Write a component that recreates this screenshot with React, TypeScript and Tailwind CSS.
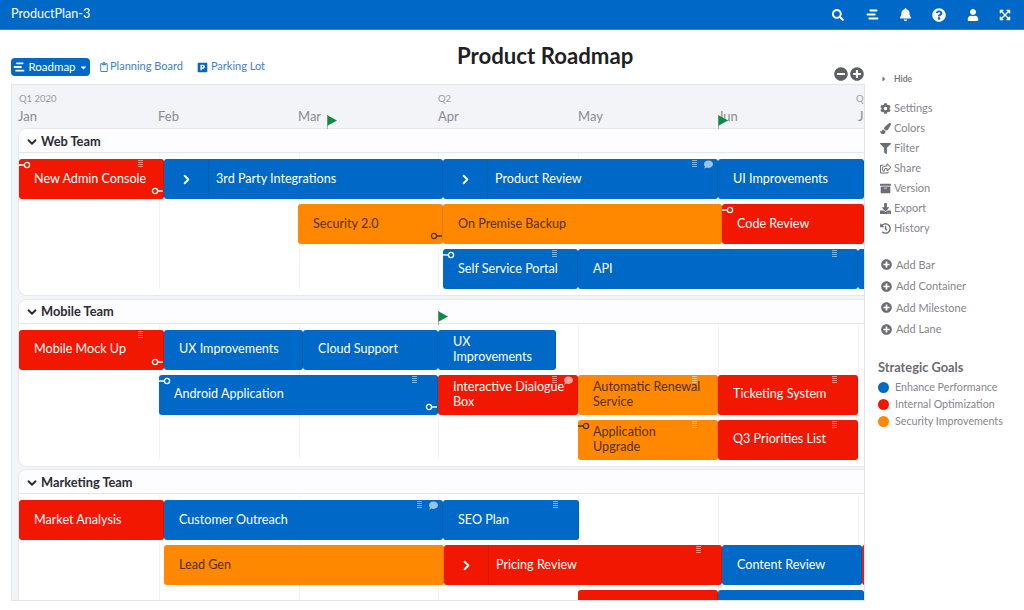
import type { FC } from 'react';
import { ChevronDown, ChevronRight } from 'lucide-react';
import {
  FaArchive,
  FaBell,
  FaCaretDown,
  FaCaretRight,
  FaCog,
  FaComment,
  FaDownload,
  FaExpandArrowsAlt,
  FaFilter,
  FaHistory,
  FaMinusCircle,
  FaPaintBrush,
  FaParking,
  FaPlusCircle,
  FaQuestionCircle,
  FaRegClipboard,
  FaRegShareSquare,
  FaSearch,
  FaUser,
} from 'react-icons/fa';

type Tone = 'blue' | 'red' | 'orange';

interface BarData {
  label?: string;
  tone: Tone;
  size: string;
  chevron?: boolean;
  start?: boolean;
  end?: boolean;
  grip?: boolean;
  comment?: boolean;
}

interface LaneData {
  name: string;
  rows: BarData[][];
}

const toneClass: Record<Tone, string> = {
  blue: 'bg-[#0069c8] text-white',
  red: 'bg-[#f21700] text-white',
  orange: 'bg-[#ff8800] text-[#4f3000]',
};

const lanes: LaneData[] = [
  {
    name: 'Web Team',
    rows: [
      [
        { label: 'New Admin Console', tone: 'red', size: 'w-[145px]', start: true, end: true, grip: true },
        { label: '3rd Party Integrations', tone: 'blue', size: 'w-[279px]', chevron: true },
        { label: 'Product Review', tone: 'blue', size: 'w-[275px]', chevron: true, grip: true, comment: true },
        { label: 'UI Improvements', tone: 'blue', size: 'w-[146px]' },
      ],
      [
        { label: 'Security 2.0', tone: 'orange', size: 'ml-[279px] w-[145px]', end: true },
        { label: 'On Premise Backup', tone: 'orange', size: 'w-[279px]' },
        { label: 'Code Review', tone: 'red', size: 'w-[142px]', start: true },
      ],
      [
        { label: 'Self Service Portal', tone: 'blue', size: 'ml-[424px] w-[135px]', start: true, grip: true },
        { label: 'API', tone: 'blue', size: 'w-[280px]', grip: true },
        { tone: 'blue', size: 'w-[10px]' },
      ],
    ],
  },
  {
    name: 'Mobile Team',
    rows: [
      [
        { label: 'Mobile Mock Up', tone: 'red', size: 'w-[145px]', end: true, grip: true },
        { label: 'UX Improvements', tone: 'blue', size: 'w-[139px]' },
        { label: 'Cloud Support', tone: 'blue', size: 'w-[135px]' },
        { label: 'UX Improvements', tone: 'blue', size: 'w-[118px]' },
      ],
      [
        { label: 'Android Application', tone: 'blue', size: 'ml-[140px] w-[279px]', start: true, end: true, grip: true },
        { label: 'Interactive Dialogue Box', tone: 'red', size: 'w-[140px]', grip: true, comment: true },
        { label: 'Automatic Renewal Service', tone: 'orange', size: 'w-[140px]', grip: true },
        { label: 'Ticketing System', tone: 'red', size: 'w-[140px]', grip: true },
      ],
      [
        { label: 'Application Upgrade', tone: 'orange', size: 'ml-[559px] w-[140px] pr-[30px]', start: true, grip: true },
        { label: 'Q3 Priorities List', tone: 'red', size: 'w-[140px]', grip: true },
      ],
    ],
  },
  {
    name: 'Marketing Team',
    rows: [
      [
        { label: 'Market Analysis', tone: 'red', size: 'w-[145px]' },
        { label: 'Customer Outreach', tone: 'blue', size: 'w-[279px]', grip: true, comment: true },
        { label: 'SEO Plan', tone: 'blue', size: 'w-[136px]', grip: true },
      ],
      [
        { label: 'Lead Gen', tone: 'orange', size: 'ml-[145px] w-[280px]' },
        { label: 'Pricing Review', tone: 'red', size: 'w-[278px]', chevron: true, grip: true },
        { label: 'Content Review', tone: 'blue', size: 'w-[140px]' },
        { tone: 'red', size: 'w-[10px]' },
      ],
      [
        { tone: 'red', size: 'ml-[559px] w-[140px]' },
        { tone: 'blue', size: 'w-[146px]' },
      ],
    ],
  },
];

const tools = [
  { label: 'Settings', icon: FaCog },
  { label: 'Colors', icon: FaPaintBrush },
  { label: 'Filter', icon: FaFilter },
  { label: 'Share', icon: FaRegShareSquare },
  { label: 'Version', icon: FaArchive },
  { label: 'Export', icon: FaDownload },
  { label: 'History', icon: FaHistory },
];

const goals = [
  { label: 'Enhance Performance', color: 'bg-[#0069c8]' },
  { label: 'Internal Optimization', color: 'bg-[#f21700]' },
  { label: 'Security Improvements', color: 'bg-[#ff8800]' },
];

// staggered bars, the roadmap glyph used in the nav and the tab
const RoadmapIcon: FC<{ className: string }> = ({ className }) => (
  <svg viewBox="0 0 14 12" className={className} fill="currentColor">
    <rect x="3.5" y="0.5" width="9" height="2.2" rx="1.1" />
    <rect x="0.5" y="4.9" width="10" height="2.2" rx="1.1" />
    <rect x="2.5" y="9.3" width="11" height="2.2" rx="1.1" />
  </svg>
);

const Connector: FC<{ flip?: boolean; className: string }> = ({ flip, className }) => (
  <svg
    viewBox="0 0 12 8"
    className={`absolute h-2 w-3 ${className}`}
    fill="none"
    stroke="currentColor"
    strokeWidth="1.3"
  >
    {flip ? (
      <>
        <circle cx="4" cy="4" r="2.6" />
        <path d="M6.6 4H12" />
      </>
    ) : (
      <>
        <path d="M0 4h5.4" />
        <circle cx="8" cy="4" r="2.6" />
      </>
    )}
  </svg>
);

const Bar: FC<{ bar: BarData }> = ({ bar }) => (
  <div
    className={`relative flex h-10 shrink-0 items-center rounded-[3px] border-r border-black/10 ${toneClass[bar.tone]} ${bar.size}`}
  >
    {bar.chevron && (
      <div className="flex h-full w-[45px] shrink-0 items-center justify-center border-r border-black/10">
        <ChevronRight size={15} strokeWidth={3} />
      </div>
    )}
    {bar.label && (
      <span className={`pb-[2px] text-[12.6px] leading-[15px] ${bar.chevron ? 'pl-[7px]' : 'pl-[15px] pr-1'}`}>
        {bar.label}
      </span>
    )}
    {bar.start && <Connector className="left-0 top-[2px]" />}
    {bar.end && <Connector flip className="bottom-[4px] right-0" />}
    {bar.grip && (
      <div className="absolute right-[20px] top-[1px] flex w-[5px] flex-col gap-px opacity-50">
        <div className="h-px bg-white" />
        <div className="h-px bg-white" />
        <div className="h-px bg-white" />
        <div className="h-px bg-white" />
      </div>
    )}
    {bar.comment && <FaComment size={9} className="absolute right-[4px] top-[1px] opacity-60" />}
  </div>
);

const Lane: FC<{ lane: LaneData }> = ({ lane }) => (
  <section className="h-[166px] overflow-hidden rounded-l-lg bg-white shadow-[0_0_0_1px_#e6e8f0]">
    <div className="flex h-6 items-center gap-[2px] border-b border-[#e4e6ee] bg-[#fdfcfe] pl-[6px] pt-[2px] text-[12.8px] font-bold text-[#2b2b33]">
      <ChevronDown size={14} strokeWidth={3.2} />
      {lane.name}
    </div>
    <div className="relative flex flex-col gap-[5px] pt-[6px]">
      <div className="absolute inset-y-0 left-[140px] w-px bg-[#f3f4f7]" />
      <div className="absolute inset-y-0 left-[280px] w-px bg-[#f3f4f7]" />
      <div className="absolute inset-y-0 left-[419px] w-px bg-[#f3f4f7]" />
      <div className="absolute inset-y-0 left-[559px] w-px bg-[#f3f4f7]" />
      <div className="absolute inset-y-0 left-[699px] w-px bg-[#f3f4f7]" />
      <div className="absolute inset-y-0 left-[839px] w-px bg-[#f3f4f7]" />
      {lane.rows.map((row, rowIndex) => (
        <div key={rowIndex} className="relative flex h-10">
          {row.map((bar, barIndex) => (
            <Bar key={barIndex} bar={bar} />
          ))}
        </div>
      ))}
    </div>
  </section>
);

const Flag: FC<{ className: string }> = ({ className }) => (
  <svg viewBox="0 0 10 14" className={`absolute h-[14px] w-[10px] ${className}`}>
    <path d="M0 0l10 5.5L0 11z" fill="#0b8c43" />
    <path d="M.4 0v14" stroke="#7f9a8a" strokeWidth=".8" />
  </svg>
);

export default function App() {
  return (
    <div className="h-[610px] w-[1024px] overflow-hidden bg-white font-['Lato',sans-serif]">
      <header className="flex h-[30px] items-center justify-between border-b border-[#2f86d6] bg-[#0069c8] pl-[11px] pr-[13px] text-white">
        <span className="text-[12.6px]">ProductPlan-3</span>
        <div className="flex items-center">
          <FaSearch size={12} />
          <RoadmapIcon className="ml-[22px] h-[11px] w-[13px]" />
          <FaBell size={13} className="ml-[20px]" />
          <FaQuestionCircle size={14} className="ml-[20px]" />
          <FaUser size={12} className="ml-[21px]" />
          <FaExpandArrowsAlt size={12} className="ml-[20px]" />
        </div>
      </header>
      <div className="flex">
        <main className="ml-[11px] w-[853px] shrink-0">
          <div className="flex h-[54px] items-start">
            <div className="flex w-[446px] items-center pt-[28px] text-[11px] text-[#3b82d0]">
              <div className="flex h-[18px] w-[79px] items-center justify-center gap-[3px] rounded-[4px] bg-[#0069c8] text-[11.5px] text-white">
                <RoadmapIcon className="h-[10px] w-[12px]" />
                <span className="pb-[2px]">Roadmap</span>
                <FaCaretDown size={9} />
              </div>
              <FaRegClipboard size={10} className="ml-[9px]" />
              <span className="ml-px pb-[2px]">Planning Board</span>
              <FaParking size={11} className="ml-[14px] text-[#0069c8]" />
              <span className="ml-[3px] pb-[2px]">Parking Lot</span>
            </div>
            <h1 className="pt-[13px] text-[22.2px] font-bold leading-[26px] text-[#1f1f24]">Product Roadmap</h1>
            <div className="ml-auto flex gap-[2px] pt-[37px] text-[#5f6066]">
              <FaMinusCircle size={14} />
              <FaPlusCircle size={14} />
            </div>
          </div>
          <div className="relative h-[517px] overflow-hidden border-y border-l border-[#e3e5ec] bg-[#f3f4f8] pl-[7px] shadow-[1px_0_0_#e3e5ec]">
            <div className="h-11 text-[#8a8b91]">
              <div className="-ml-px flex pt-[9px] text-[9.5px] leading-[10px] text-[#9a9ba1]">
                <span className="w-[419px] pl-[1px]">Q1 2020</span>
                <span className="w-[419px] pl-px">Q2</span>
                <span>Q</span>
              </div>
              <div className="-ml-px flex pt-[5px] text-[13px] leading-[15px]">
                <span className="w-[140px]">Jan</span>
                <span className="w-[140px]">Feb</span>
                <span className="w-[140px]">Mar</span>
                <span className="w-[140px]">Apr</span>
                <span className="w-[140px]">May</span>
                <span className="w-[140px]">Jun</span>
                <span>J</span>
              </div>
            </div>
            <div className="flex flex-col gap-[4.5px]">
              {lanes.map((lane) => (
                <Lane key={lane.name} lane={lane} />
              ))}
            </div>
            <Flag className="left-[315px] top-[30px]" />
            <Flag className="left-[706px] top-[30px]" />
            <Flag className="left-[426px] top-[226px]" />
          </div>
        </main>
        <aside className="flex-1 pl-[15px] pt-[43px] text-[#85868c]">
          <div className="flex items-center gap-[6px] pl-[1px] text-[8.5px] font-bold leading-[12px] text-[#77787e]">
            <FaCaretRight size={8} />
            Hide
          </div>
          <ul className="mt-[13px] flex flex-col">
            {tools.map(({ label, icon: Icon }) => (
              <li key={label} className="flex h-5 items-center gap-[3px] text-[11px]">
                <span className="flex w-[12px] justify-center text-[#6c6d73]">
                  <Icon size={11} />
                </span>
                {label}
              </li>
            ))}
          </ul>
          <ul className="ml-[2px] mt-[16px] flex flex-col">
            {['Add Bar', 'Add Container', 'Add Milestone', 'Add Lane'].map((label) => (
              <li key={label} className="flex h-[21.5px] items-center gap-[4px] text-[11px]">
                <FaPlusCircle size={11} className="text-[#6c6d73]" />
                {label}
              </li>
            ))}
          </ul>
          <h2 className="-ml-px mt-[19px] text-[12.8px] font-bold leading-[16px] text-[#6b6c72]">Strategic Goals</h2>
          <ul className="-ml-px mt-[4px] flex flex-col">
            {goals.map((goal) => (
              <li key={goal.label} className="flex h-[17px] items-center gap-[6px] text-[10.7px]">
                <span className={`size-[11px] rounded-full ${goal.color}`} />
                {goal.label}
              </li>
            ))}
          </ul>
        </aside>
      </div>
    </div>
  );
}
